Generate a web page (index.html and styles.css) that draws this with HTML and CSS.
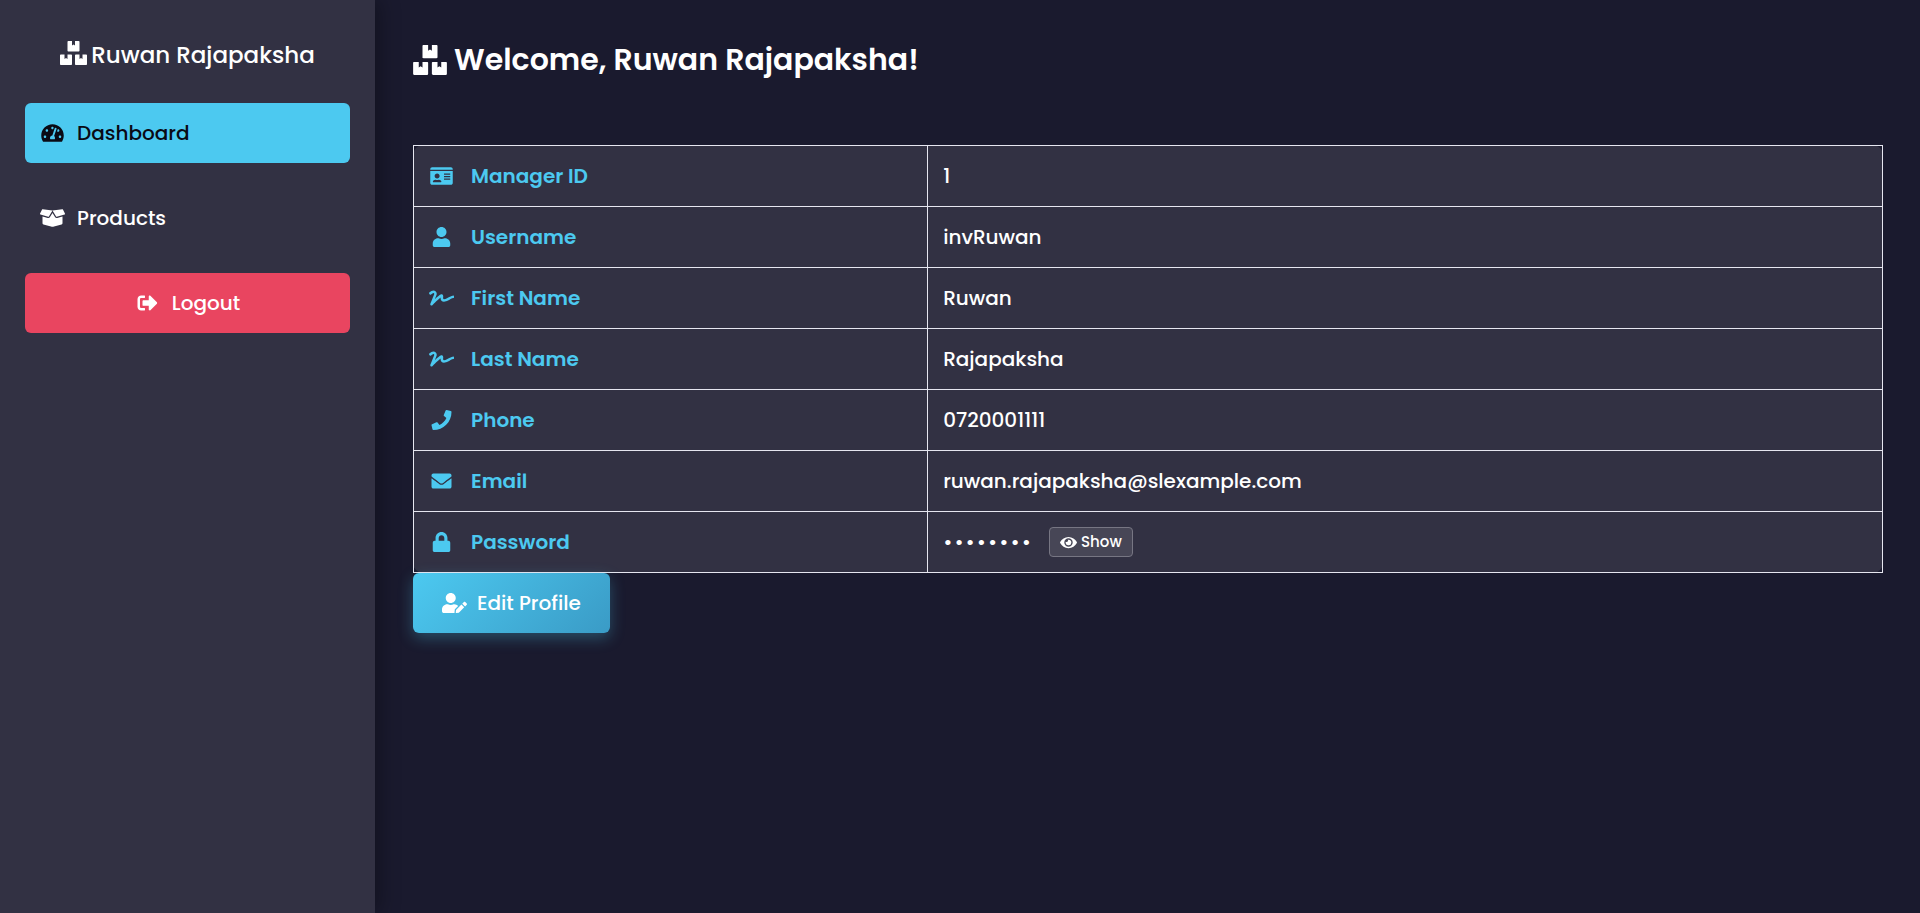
FILE: index.html
```html
<!DOCTYPE html>
<html lang="en">
<head>
<meta charset="utf-8">
<meta name="viewport" content="width=device-width, initial-scale=1">
<title>Manager Dashboard</title>
<link rel="stylesheet" href="styles.css">
</head>
<body>
<svg class="sprite" aria-hidden="true">
  <symbol id="boxes" viewBox="0 0 576 512"><path d="M560 288h-80v96l-32-21.3-32 21.3v-96h-80c-8.8 0-16 7.2-16 16v192c0 8.8 7.2 16 16 16h224c8.8 0 16-7.2 16-16V304c0-8.8-7.2-16-16-16zm-384-64h224c8.8 0 16-7.2 16-16V16c0-8.8-7.2-16-16-16h-80v96l-32-21.3L256 96V0h-80c-8.8 0-16 7.2-16 16v192c0 8.8 7.2 16 16 16zm64 64h-80v96l-32-21.3L96 384v-96H16c-8.8 0-16 7.2-16 16v192c0 8.8 7.2 16 16 16h224c8.8 0 16-7.2 16-16V304c0-8.8-7.2-16-16-16z"/></symbol>
  <symbol id="gauge" viewBox="0 0 576 512"><path d="M288 32C128.94 32 0 160.94 0 320c0 52.8 14.25 102.26 39.06 144.8 5.61 9.62 16.3 15.2 27.44 15.2h443c11.14 0 21.83-5.58 27.44-15.2C561.75 422.26 576 372.8 576 320c0-159.06-128.94-288-288-288zm0 64c14.71 0 26.58 10.13 30.32 23.65-1.11 2.26-2.64 4.23-3.45 6.67l-9.22 27.67c-5.13 3.49-10.97 6.01-17.64 6.01-17.67 0-32-14.33-32-32S270.33 96 288 96zM96 384c-17.67 0-32-14.33-32-32s14.33-32 32-32 32 14.33 32 32-14.33 32-32 32zm48-160c-17.67 0-32-14.33-32-32s14.33-32 32-32 32 14.33 32 32-14.33 32-32 32zm246.77-72.41l-61.33 184C343.13 347.33 352 364.54 352 384c0 11.72-3.38 22.55-8.88 32H232.88c-5.5-9.45-8.88-20.28-8.88-32 0-33.94 26.5-61.43 59.9-63.59l61.34-184.01c4.17-12.56 17.73-19.45 30.36-15.17 12.57 4.19 19.35 17.79 15.17 30.36zm14.66 57.2l15.52-46.55c3.47-1.29 7.13-2.23 11.05-2.23 17.67 0 32 14.33 32 32s-14.33 32-32 32c-11.38-.01-20.89-6.28-26.57-15.22zM480 384c-17.67 0-32-14.33-32-32s14.33-32 32-32 32 14.33 32 32-14.33 32-32 32z"/></symbol>
  <symbol id="box-open" viewBox="0 0 640 512"><path d="M425.7 256c-16.9 0-32.8-9-41.4-23.4L320 126l-64.2 106.6c-8.7 14.5-24.6 23.5-41.5 23.5-4.5 0-9-.6-13.3-1.9L64 215v178c0 14.7 10 27.5 24.2 31l216.2 54.1c10.2 2.5 20.9 2.5 31 0L551.8 424c14.2-3.6 24.2-16.4 24.2-31V215l-137 39.1c-4.3 1.3-8.8 1.9-13.3 1.9zm212.6-112.2L586.8 41c-3.1-6.2-9.8-9.8-16.7-8.9L320 64l91.7 152.1c3.8 6.3 11.4 9.3 18.5 7.3l197.9-56.5c9.9-2.9 14.7-13.9 10.2-23.1zM53.2 41L1.7 143.8c-4.6 9.2.3 20.2 10.1 23l197.9 56.5c7.1 2 14.7-1 18.5-7.3L320 64 69.8 32.1c-6.9-.8-13.5 2.7-16.6 8.9z"/></symbol>
  <symbol id="sign-out" viewBox="0 0 512 512"><path d="M497 273L329 441c-15 15-41 4.5-41-17v-96H152c-13.3 0-24-10.7-24-24v-96c0-13.3 10.7-24 24-24h136V88c0-21.4 25.9-32 41-17l168 168c9.3 9.4 9.3 24.6 0 34zM192 436v-40c0-6.6-5.4-12-12-12H96c-17.7 0-32-14.3-32-32V160c0-17.7 14.3-32 32-32h84c6.6 0 12-5.4 12-12V76c0-6.6-5.4-12-12-12H96c-53 0-96 43-96 96v192c0 53 43 96 96 96h84c6.6 0 12-5.4 12-12z"/></symbol>
  <symbol id="id-card" viewBox="0 0 576 512"><path d="M528 32H48C21.5 32 0 53.5 0 80v16h576V80c0-26.5-21.5-48-48-48zM0 432c0 26.5 21.5 48 48 48h480c26.5 0 48-21.5 48-48V128H0v304zm352-232c0-4.4 3.6-8 8-8h144c4.4 0 8 3.6 8 8v16c0 4.4-3.6 8-8 8H360c-4.4 0-8-3.6-8-8v-16zm0 64c0-4.4 3.6-8 8-8h144c4.4 0 8 3.6 8 8v16c0 4.4-3.6 8-8 8H360c-4.4 0-8-3.6-8-8v-16zm0 64c0-4.4 3.6-8 8-8h144c4.4 0 8 3.6 8 8v16c0 4.4-3.6 8-8 8H360c-4.4 0-8-3.6-8-8v-16zM176 192c35.3 0 64 28.7 64 64s-28.7 64-64 64-64-28.7-64-64 28.7-64 64-64zM67.1 396.2C75.5 370.5 99.6 352 128 352h8.2c12.3 5.1 25.7 8 39.8 8s27.6-2.9 39.8-8h8.2c28.4 0 52.5 18.5 60.9 44.2 3.2 9.9-5.2 19.8-15.6 19.8H82.7c-10.4 0-18.8-10-15.6-19.8z"/></symbol>
  <symbol id="user" viewBox="0 0 448 512"><path d="M224 256c70.7 0 128-57.3 128-128S294.7 0 224 0 96 57.3 96 128s57.3 128 128 128zm89.6 32h-16.7c-22.2 10.2-46.9 16-72.9 16s-50.6-5.8-72.9-16h-16.7C60.2 288 0 348.2 0 422.4V464c0 26.5 21.5 48 48 48h352c26.5 0 48-21.5 48-48v-41.6c0-74.2-60.2-134.4-134.4-134.4z"/></symbol>
  <symbol id="signature" viewBox="0 0 640 512"><path d="M623.2 192c-51.8 3.5-125.7 54.7-163.1 71.5-29.1 13.1-54.2 24.4-76.1 24.4-22.6 0-26-16.2-21.3-51.9 1.1-8 11.7-79.2-42.7-76.1-25.1 1.5-64.3 24.8-169.5 126L192 182.2c30.4-75.9-53.2-151.5-129.7-102.8L7.4 116.3C0 121-2.2 130.9 2.5 138.4l17.2 27c4.7 7.5 14.6 9.7 22.1 4.9l58-38.9c18.4-11.7 40.7 7.2 32.7 27.1L34.3 404.1C27.5 421 37 448 64 448c8.3 0 16.5-3.2 22.6-9.4 42.2-42.2 154.7-150.7 211.2-195.8-2.2 28.5-2.1 58.9 20.6 83.8 15.3 16.8 37.3 25.3 65.5 25.3 35.6 0 68-14.6 102.3-30 33-14.8 99-62.6 138.4-65.8 8.5-.7 15.2-7.3 15.2-15.8v-32.1c.2-9.1-7.5-16.8-16.6-16.2z"/></symbol>
  <symbol id="phone" viewBox="0 0 512 512"><path d="M493.4 24.6l-104-24c-11.3-2.6-22.9 3.3-27.5 13.9l-48 112c-4.2 9.8-1.4 21.3 6.9 28l60.6 49.6c-36 76.7-98.9 140.5-177.2 177.2l-49.6-60.6c-6.8-8.3-18.2-11.1-28-6.9l-112 48C3.9 366.5-2 378.1.6 389.4l24 104C27.1 504.2 36.7 512 48 512c256.1 0 464-207.5 464-464 0-11.2-7.7-20.9-18.6-23.4z"/></symbol>
  <symbol id="envelope" viewBox="0 0 512 512"><path d="M502.3 190.8c3.9-3.1 9.7-.2 9.7 4.7V400c0 26.5-21.5 48-48 48H48c-26.5 0-48-21.5-48-48V195.6c0-5 5.7-7.8 9.7-4.7 22.4 17.4 52.1 39.5 154.1 113.6 21.1 15.4 56.7 47.8 92.2 47.6 35.7.3 72-32.8 92.3-47.6 102-74.1 131.6-96.3 154-113.7zM256 320c23.2.4 56.6-29.2 73.4-41.4 132.7-96.3 142.8-104.7 173.4-128.7 5.8-4.5 9.2-11.5 9.2-18.9v-19c0-26.5-21.5-48-48-48H48c-26.5 0-48 21.5-48 48v19c0 7.4 3.4 14.3 9.2 18.9 30.6 23.9 40.7 32.4 173.4 128.7 16.8 12.2 50.2 41.8 73.4 41.4z"/></symbol>
  <symbol id="lock" viewBox="0 0 448 512"><path d="M400 224h-24v-72C376 68.2 307.8 0 224 0S72 68.2 72 152v72H48c-26.5 0-48 21.5-48 48v192c0 26.5 21.5 48 48 48h352c26.5 0 48-21.5 48-48V272c0-26.5-21.5-48-48-48zm-104 0H152v-72c0-39.7 32.3-72 72-72s72 32.3 72 72v72z"/></symbol>
  <symbol id="eye" viewBox="0 0 576 512"><path d="M572.52 241.4C518.29 135.59 410.93 64 288 64S57.68 135.64 3.48 241.41a32.35 32.35 0 0 0 0 29.19C57.71 376.41 165.07 448 288 448s230.32-71.64 284.52-177.41a32.35 32.35 0 0 0 0-29.19zM288 400a144 144 0 1 1 144-144 143.93 143.93 0 0 1-144 144zm0-240a95.31 95.31 0 0 0-25.31 3.79 47.85 47.85 0 0 1-66.9 66.9A95.78 95.78 0 1 0 288 160z"/></symbol>
  <symbol id="user-edit" viewBox="0 0 640 512"><path d="M224 256c70.7 0 128-57.3 128-128S294.7 0 224 0 96 57.3 96 128s57.3 128 128 128zm89.6 32h-16.7c-22.2 10.2-46.9 16-72.9 16s-50.6-5.8-72.9-16h-16.7C60.2 288 0 348.2 0 422.4V464c0 26.5 21.5 48 48 48h274.9c-2.4-6.8-3.4-14-2.6-21.3l6.8-60.9 1.2-11.1 7.9-7.9 77.3-77.3c-24.5-27.7-60-45.5-99.9-45.5zm45.3 145.3l-6.8 61c-1.1 10.2 7.5 18.8 17.6 17.6l60.9-6.8 137.9-137.9-71.7-71.7-137.9 137.8zM633 268.9L595.1 231c-9.3-9.3-24.5-9.3-33.8 0l-37.8 37.8-4.1 4.1 71.8 71.7 41.8-41.8c9.3-9.4 9.3-24.5 0-33.9z"/></symbol>
</svg>
<div class="layout">
  <aside class="sidebar">
    <h2 class="brand"><svg class="icon icon-brand"><use href="#boxes"/></svg>Ruwan Rajapaksha</h2>
    <nav class="menu">
      <a class="menu-link menu-link-active" href="#dashboard"><svg class="icon"><use href="#gauge"/></svg>Dashboard</a>
      <a class="menu-link" href="#products"><svg class="icon"><use href="#box-open"/></svg>Products</a>
      <button class="menu-link menu-logout" type="button"><svg class="icon"><use href="#sign-out"/></svg>Logout</button>
    </nav>
  </aside>
  <main class="content">
    <h1 class="welcome"><svg class="icon icon-welcome"><use href="#boxes"/></svg>Welcome, Ruwan Rajapaksha!</h1>
    <table class="profile">
      <tbody>
        <tr><th scope="row"><span class="label"><svg class="icon"><use href="#id-card"/></svg>Manager ID</span></th><td>1</td></tr>
        <tr><th scope="row"><span class="label"><svg class="icon"><use href="#user"/></svg>Username</span></th><td>invRuwan</td></tr>
        <tr><th scope="row"><span class="label"><svg class="icon"><use href="#signature"/></svg>First Name</span></th><td>Ruwan</td></tr>
        <tr><th scope="row"><span class="label"><svg class="icon"><use href="#signature"/></svg>Last Name</span></th><td>Rajapaksha</td></tr>
        <tr><th scope="row"><span class="label"><svg class="icon"><use href="#phone"/></svg>Phone</span></th><td>0720001111</td></tr>
        <tr><th scope="row"><span class="label"><svg class="icon"><use href="#envelope"/></svg>Email</span></th><td>ruwan.rajapaksha@slexample.com</td></tr>
        <tr><th scope="row"><span class="label"><svg class="icon"><use href="#lock"/></svg>Password</span></th><td><span class="secret"><span class="mask">••••••••</span><button class="show" type="button"><svg class="icon icon-show"><use href="#eye"/></svg>Show</button></span></td></tr>
      </tbody>
    </table>
    <button class="edit" type="button"><svg class="icon"><use href="#user-edit"/></svg>Edit Profile</button>
  </main>
</div>
</body>
</html>
```
FILE: styles.css
```css
* {
  box-sizing: border-box;
}

body {
  margin: 0;
  background: #1a1a2e;
  color: #fff;
  font-family: Poppins, Inter, "Open Sans", sans-serif;
  font-size: 20px;
  font-weight: 500;
  line-height: 30px;
}

button {
  border: 0;
  color: inherit;
  font: inherit;
  cursor: pointer;
}

.sprite {
  display: none;
}

.icon {
  flex: none;
  width: 25px;
  height: 20px;
  fill: currentColor;
}

.layout {
  display: flex;
  min-height: 100vh;
}

.sidebar {
  flex: none;
  width: 375px;
  padding: 37px 25px;
  background: #323143;
  box-shadow: 5px 0 19px rgba(0, 0, 0, 0.3);
}

.brand {
  display: flex;
  justify-content: center;
  gap: 4px;
  margin: 0 0 30px;
  font-size: 23px;
  font-weight: 500;
  line-height: 36px;
}

.icon-brand {
  width: 27px;
  height: 24px;
  margin-top: 4px;
}

.menu {
  display: flex;
  flex-direction: column;
  gap: 25px;
}

.menu-link {
  display: flex;
  align-items: center;
  gap: 12px;
  padding: 15px;
  border-radius: 6px;
  color: #fff;
  text-decoration: none;
}

.menu-link-active {
  background: #4cc9f0;
  color: #0a0a14;
}

.menu-logout {
  justify-content: center;
  background: #e94560;
}

.content {
  flex: 1;
  min-width: 0;
  padding: 37px 37px 37px 38px;
}

.welcome {
  display: flex;
  gap: 7px;
  margin: 0 0 62px;
  font-size: 30px;
  font-weight: 600;
  line-height: 46px;
}

.icon-welcome {
  width: 34px;
  height: 30px;
  margin-top: 8px;
}

.profile {
  width: 100%;
  border-collapse: collapse;
  border-radius: 10px;
  background: #323143;
}

.profile th,
.profile td {
  padding: 15px;
  border: 1px solid #e6e6f0;
  text-align: left;
}

.profile th {
  width: 35%;
  color: #4cc9f0;
  font-weight: 600;
}

.label {
  display: flex;
  align-items: center;
  gap: 17px;
}

.secret {
  display: flex;
  align-items: center;
  gap: 16px;
}

.mask {
  letter-spacing: 2px;
}

.show {
  display: flex;
  align-items: center;
  gap: 4px;
  padding: 3px 10px;
  border: 1px solid #777683;
  border-radius: 4px;
  background: #474656;
  font-size: 15px;
  line-height: 22px;
}

.icon-show {
  width: 17px;
  height: 15px;
}

.edit {
  display: flex;
  align-items: center;
  gap: 10px;
  padding: 15px 29px;
  border-radius: 6px;
  background: linear-gradient(135deg, #4cc9f0, #3a9bc6);
  box-shadow: 0 5px 15px rgba(76, 201, 240, 0.3);
}
```
